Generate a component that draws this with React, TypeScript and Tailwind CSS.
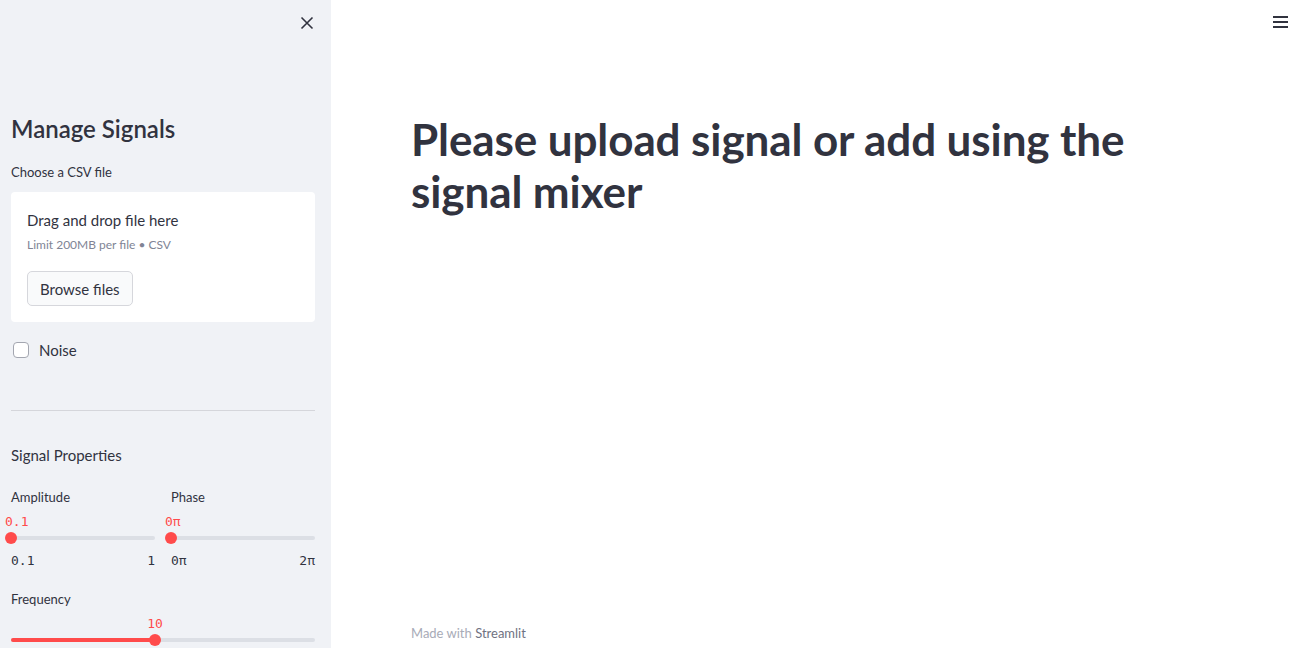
import React from "react";

const sans = { fontFamily: "Lato, 'Noto Sans', sans-serif" };

function Slider({
  min,
  max,
  value,
  pct,
  labelLeft,
  ticks = true,
}: {
  min: string;
  max: string;
  value: string;
  pct: number;
  labelLeft: boolean;
  ticks?: boolean;
}) {
  return (
    <div className="flex flex-col">
      <div className="relative h-[30px]">
        <div
          className="absolute top-[1px] text-[13px] leading-[16px] text-[#ff4b4b] font-['DejaVu_Sans_Mono',monospace] whitespace-nowrap"
          style={
            labelLeft
              ? { left: `calc(${pct}% - 6px)` }
              : { left: `${pct}%`, transform: "translateX(-50%)" }
          }
        >
          {value}
        </div>
        <div className="absolute left-0 right-0 top-[23px] h-[4px] rounded-full bg-[#dcdfe5]" />
        <div
          className="absolute left-0 top-[23px] h-[4px] rounded-full bg-[#ff4b4b]"
          style={{ width: `${pct}%` }}
        />
        <div
          className="absolute top-[19px] h-[12px] w-[12px] rounded-full bg-[#ff4b4b]"
          style={{ left: `calc(${pct}% - 6px)` }}
        />
      </div>
      {ticks && (
        <div className="mt-[10px] flex justify-between text-[13px] leading-[16px] text-[#31333f] font-['DejaVu_Sans_Mono',monospace]">
          <span>{min}</span>
          <span>{max}</span>
        </div>
      )}
    </div>
  );
}

export default function App() {
  return (
    <div className="flex h-[648px] w-[1304px] overflow-hidden bg-white text-[#31333f]" style={sans}>
      {/* Sidebar */}
      <aside className="flex h-full w-[331px] shrink-0 flex-col overflow-hidden bg-[#f0f2f6]">
        <div className="flex justify-end pr-[17px] pt-[16px]">
          <svg width="14" height="14" viewBox="0 0 14 14" fill="none">
            <path d="M1.5 1.5 L12.5 12.5 M12.5 1.5 L1.5 12.5" stroke="#31333f" strokeWidth="1.6" />
          </svg>
        </div>
        <div className="flex flex-col pl-[11px] pr-[16px]">
          <h2 className="mt-[83px] text-[24px] font-semibold leading-[32px]">Manage Signals</h2>
          <div className="mt-[17px] text-[13px] leading-[20px]">Choose a CSV file</div>
          <div className="mt-[10px] flex h-[130px] flex-col items-start rounded-[4px] bg-white px-[16px] pt-[18px]">
            <div className="text-[15px] leading-[20px]">Drag and drop file here</div>
            <div className="mt-[7px] text-[12px] leading-[16px] text-[#808495]">Limit 200MB per file • CSV</div>
            <button className="mt-[18px] h-[35px] rounded-[5px] border border-[#d6d7dc] bg-[#f9fafb] px-[12px] text-[15px] leading-[20px] text-[#31333f]">
              Browse files
            </button>
          </div>
          <label className="mt-[18px] flex h-[20px] items-center gap-[10px]">
            <span className="ml-[2px] h-[16px] w-[16px] rounded-[4px] border-[1.5px] border-[#a3a6b0] bg-white" />
            <span className="text-[15px] leading-[20px]">Noise</span>
          </label>
          <div className="mt-[50px] h-px bg-[#d5d6db]" />
          <div className="mt-[34px] text-[15px] leading-[20px]">Signal Properties</div>
          <div className="mt-[23px] grid grid-cols-2 gap-[16px]">
            <div className="flex flex-col">
              <div className="text-[13px] leading-[18px]">Amplitude</div>
              <div className="mt-[7px]">
                <Slider min="0.1" max="1" value="0.1" pct={0} labelLeft />
              </div>
            </div>
            <div className="flex flex-col">
              <div className="text-[13px] leading-[18px]">Phase</div>
              <div className="mt-[7px]">
                <Slider min="0π" max="2π" value="0π" pct={0} labelLeft />
              </div>
            </div>
          </div>
          <div className="mt-[21px] text-[13px] leading-[18px]">Frequency</div>
          <div className="mt-[7px]">
            <Slider min="0" max="20" value="10" pct={47.4} labelLeft={false} ticks={false} />
          </div>
        </div>
      </aside>

      {/* Main */}
      <main className="relative flex h-full flex-1 flex-col">
        <button className="absolute right-[16px] top-[16px] flex h-[12px] w-[15px] flex-col justify-between">
          <span className="h-[2px] w-full bg-[#31333f]" />
          <span className="h-[2px] w-full bg-[#31333f]" />
          <span className="h-[2px] w-full bg-[#31333f]" />
        </button>
        <div className="ml-[80px] mt-[113px] w-[760px]">
          <h1 className="text-[44px] font-bold leading-[52px] tracking-[-0.1px]">
            Please upload signal or add using the signal mixer
          </h1>
        </div>
        <div className="flex-1" />
        <footer className="mb-[7px] ml-[80px] text-[13px] leading-[16px]">
          <span className="text-[#a8abb7]">Made with </span>
          <span className="text-[#6f7282]">Streamlit</span>
        </footer>
      </main>
    </div>
  );
}
